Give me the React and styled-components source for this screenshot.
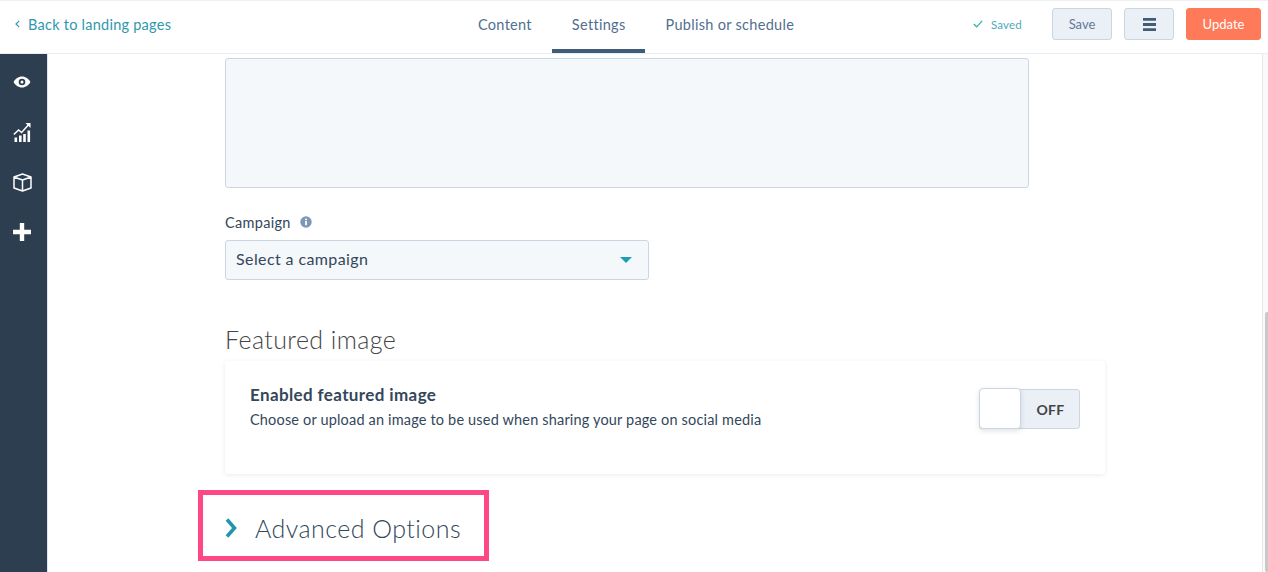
import React from 'react';
import styled, { createGlobalStyle } from 'styled-components';

const GlobalStyle = createGlobalStyle`
  html, body {
    margin: 0;
    padding: 0;
    height: 572px;
    overflow: hidden;
    background: #fff;
    font-family: "Lato", "Liberation Sans", sans-serif;
    -webkit-font-smoothing: antialiased;
  }
`;

const Page = styled.div`
  width: 1268px;
  height: 572px;
  display: flex;
  flex-direction: column;
  overflow: hidden;
`;

const TopBar = styled.header`
  height: 54px;
  box-sizing: border-box;
  flex: none;
  display: grid;
  grid-template-columns: 443px auto 1fr;
  align-items: stretch;
  border-top: 1px solid #f0f1f2;
  border-bottom: 1px solid #e9eef4;
  padding: 0 7px 0 15px;
`;

const BackLink = styled.a`
  display: flex;
  align-items: center;
  gap: 8px;
  padding-bottom: 6px;
  font-size: 14.5px;
  letter-spacing: 0.25px;
  color: #2f97ad;
`;

const Tabs = styled.nav`
  display: flex;
  align-items: stretch;
`;

const Tab = styled.a`
  display: flex;
  align-items: center;
  padding: 0 20px 2px;
  font-size: 14.5px;
  letter-spacing: 0.3px;
  color: #516f90;
  border-bottom: 4px solid ${p => (p.$active ? '#425b76' : 'transparent')};
  box-sizing: border-box;
`;

const Actions = styled.div`
  display: flex;
  align-items: center;
  justify-content: flex-end;
  padding-bottom: 6px;
`;

const SavedNote = styled.span`
  display: flex;
  align-items: center;
  gap: 8px;
  font-size: 11.5px;
  letter-spacing: 0.2px;
  color: #4fa9bd;
  margin-right: 30px;
`;

const Button = styled.button`
  height: 32px;
  box-sizing: border-box;
  display: flex;
  align-items: center;
  justify-content: center;
  border-radius: 3px;
  font-family: inherit;
  font-size: 13px;
  padding: 0;
  width: ${p => p.$width}px;
  margin-left: ${p => p.$gap || 0}px;
  color: ${p => (p.$primary ? '#fff' : '#5f7a96')};
  background: ${p => (p.$primary ? '#ff7a59' : '#eaf0f6')};
  border: 1px solid ${p => (p.$primary ? '#ff7a59' : '#cbd6e2')};
`;

const Body = styled.div`
  flex: 1;
  display: flex;
  min-height: 0;
`;

const Rail = styled.aside`
  width: 44px;
  flex: none;
  background: #2d3e50;
  border-right: 1px solid #dfe3eb;
  display: flex;
  flex-direction: column;
  align-items: center;
  padding: 3px 3px 0 0;
`;

const RailItem = styled.div`
  height: 50px;
  display: flex;
  align-items: center;
  justify-content: center;
`;

const Main = styled.main`
  flex: 1;
  min-width: 0;
  padding: 4px 0 0 177px;
`;

const Preview = styled.div`
  width: 804px;
  height: 130px;
  box-sizing: border-box;
  background: #f5f8fa;
  border: 1px solid #cbd6e2;
  border-radius: 3px;
`;

const FieldLabel = styled.label`
  display: flex;
  align-items: center;
  gap: 9px;
  margin-top: 25px;
  height: 18px;
  font-size: 14.5px;
  letter-spacing: 0.3px;
  color: #33475b;
`;

const Select = styled.div`
  width: 424px;
  height: 40px;
  box-sizing: border-box;
  margin-top: 9px;
  padding: 0 16px 0 10px;
  display: flex;
  align-items: center;
  justify-content: space-between;
  background: #f5f8fa;
  border: 1px solid #cbd6e2;
  border-radius: 3px;
  font-size: 16px;
  letter-spacing: 0.4px;
  color: #33475b;
`;

const SelectText = styled.span`
  padding-bottom: 4px;
`;

const Caret = styled.span`
  width: 0;
  height: 0;
  border-left: 6.5px solid transparent;
  border-right: 6.5px solid transparent;
  border-top: 6.5px solid #1f9db5;
`;

const SectionTitle = styled.h2`
  margin: 43px 0 0;
  height: 32px;
  font-size: 25px;
  line-height: 32px;
  font-weight: 300;
  letter-spacing: 0.4px;
  color: #444;
`;

const Card = styled.section`
  width: 880px;
  height: 113px;
  margin-top: 6px;
  box-sizing: border-box;
  padding: 24px 25px 0;
  display: flex;
  justify-content: space-between;
  align-items: flex-start;
  background: #fff;
  border-radius: 3px;
  box-shadow: 0 1px 4px rgba(45, 62, 80, 0.1);
`;

const CardTitle = styled.div`
  font-size: 17px;
  line-height: 20px;
  font-weight: 700;
  letter-spacing: 0.38px;
  color: #33475b;
`;

const CardText = styled.div`
  margin-top: 5px;
  font-size: 14.5px;
  line-height: 20px;
  letter-spacing: 0.17px;
  color: #33475b;
`;

const Toggle = styled.div`
  position: relative;
  margin-top: 4px;
  width: 101px;
  height: 40px;
  box-sizing: border-box;
  padding-left: 42px;
  display: flex;
  align-items: center;
  justify-content: center;
  background: #eaf0f6;
  border: 1px solid #cbd6e2;
  border-radius: 3px;
  font-size: 14px;
  font-weight: 700;
  letter-spacing: 0.3px;
  color: #444;
`;

const Knob = styled.span`
  position: absolute;
  left: -1px;
  top: -2px;
  width: 42px;
  height: 41px;
  box-sizing: border-box;
  background: #fff;
  border: 1px solid #cbd6e2;
  border-radius: 4px;
  box-shadow: 0 2px 5px rgba(45, 62, 80, 0.15);
`;

const AdvancedRow = styled.div`
  display: flex;
  align-items: center;
  gap: 18px;
  width: 291px;
  height: 71px;
  box-sizing: border-box;
  margin: 16px 0 0 -27px;
  padding: 4px 0 0 22px;
  border: 5px solid #ff4785;
  font-size: 25px;
  font-weight: 300;
  letter-spacing: 0.45px;
  color: #33475b;
`;

const Scrollbar = styled.div`
  position: absolute;
  top: 54px;
  right: 0;
  width: 6px;
  height: 518px;
  background: #fafafa;
  border-left: 1px solid #e8e8e8;
  box-sizing: border-box;
`;

const ScrollThumb = styled.div`
  position: absolute;
  top: 258px;
  right: 0;
  width: 3px;
  height: 260px;
  background: #c9c9c9;
  border-radius: 2px 0 0 2px;
`;

const EyeIcon = () => (
  <svg width="18" height="12" viewBox="0 0 18 12">
    <path fill="#fff" fillRule="evenodd" d="M9 .5c3.7 0 6.800 2.400 8.400 5.500C15.800 9.100 12.700 11.500 9 11.500S2.200 9.100.6 6C2.200 2.900 5.300.5 9 .5zm0 2.200A3.300 3.300 0 1 0 9 9.300 3.300 3.300 0 0 0 9 2.700z" />
    <circle cx="9" cy="6" r="1.500" fill="#fff" />
  </svg>
);

const ChartIcon = () => (
  <svg width="18" height="20" viewBox="0 0 18 20">
    <path fill="#fff" d="M1.500 15.500h2.600V20H1.500zM6 13.500h2.600V20H6zM10.200 12h2.600v8h-2.600zM14.500 8.500h2.600V20h-2.600z" />
    <path fill="none" stroke="#fff" strokeWidth="1.500" d="M.8 12.500l4.800-4.500 3 2.500L15.500 2.800" />
    <path fill="#fff" d="M12.500 1H17.500v5z" />
  </svg>
);

const BoxIcon = () => (
  <svg width="19" height="19" viewBox="0 0 19 19">
    <path fill="none" stroke="#fff" strokeWidth="1.500" strokeLinejoin="round" d="M9.500 1L18 4v11l-8.500 3L1 15V4zM1 4l8.500 3L18 4M9.500 7v11" />
  </svg>
);

const PlusIcon = () => (
  <svg width="18" height="18" viewBox="0 0 18 18">
    <path fill="#fff" d="M6.800 0h4.400v6.800H18v4.400h-6.800V18H6.800v-6.800H0V6.800h6.800z" />
  </svg>
);

const BackChevron = () => (
  <svg width="5" height="8" viewBox="0 0 5 8">
    <path fill="none" stroke="#2f97ad" strokeWidth="1.200" d="M4.200.8L1 4l3.200 3.200" />
  </svg>
);

const CheckIcon = () => (
  <svg width="10" height="8" viewBox="0 0 11 9">
    <path fill="none" stroke="#2fb7a8" strokeWidth="1.500" d="M.8 4.500l3.200 3.200L10.200 1" />
  </svg>
);

const MenuIcon = () => (
  <svg width="13" height="13" viewBox="0 0 13 13">
    <path fill="#425b76" d="M0 0h13v2.800H0zM0 5.100h13v2.800H0zM0 10.200h13V13H0z" />
  </svg>
);

const InfoIcon = () => (
  <svg width="12" height="12" viewBox="0 0 12 12">
    <circle cx="6" cy="6" r="5.700" fill="#7c98b6" />
    <rect x="5.100" y="5" width="1.800" height="4.200" fill="#fff" />
    <rect x="5.100" y="2.600" width="1.800" height="1.600" fill="#fff" />
  </svg>
);

const AdvancedChevron = () => (
  <svg width="12" height="20" viewBox="0 0 12 20">
    <path fill="none" stroke="#1f94ad" strokeWidth="3.500" d="M2 1.500l7.500 8.500L2 18.500" />
  </svg>
);

export default function App() {
  return (
    <Page>
      <GlobalStyle />
      <TopBar>
        <BackLink><BackChevron />Back to landing pages</BackLink>
        <Tabs>
          <Tab>Content</Tab>
          <Tab $active>Settings</Tab>
          <Tab>Publish or schedule</Tab>
        </Tabs>
        <Actions>
          <SavedNote><CheckIcon />Saved</SavedNote>
          <Button $width={60}>Save</Button>
          <Button $width={50} $gap={12}><MenuIcon /></Button>
          <Button $width={75} $gap={12} $primary>Update</Button>
        </Actions>
      </TopBar>
      <Body>
        <Rail>
          <RailItem><EyeIcon /></RailItem>
          <RailItem><ChartIcon /></RailItem>
          <RailItem><BoxIcon /></RailItem>
          <RailItem><PlusIcon /></RailItem>
        </Rail>
        <Main>
          <Preview />
          <FieldLabel>Campaign <InfoIcon /></FieldLabel>
          <Select><SelectText>Select a campaign</SelectText><Caret /></Select>
          <SectionTitle>Featured image</SectionTitle>
          <Card>
            <div>
              <CardTitle>Enabled featured image</CardTitle>
              <CardText>Choose or upload an image to be used when sharing your page on social media</CardText>
            </div>
            <Toggle><Knob />OFF</Toggle>
          </Card>
          <AdvancedRow><AdvancedChevron />Advanced Options</AdvancedRow>
        </Main>
      </Body>
      <Scrollbar><ScrollThumb /></Scrollbar>
    </Page>
  );
}
